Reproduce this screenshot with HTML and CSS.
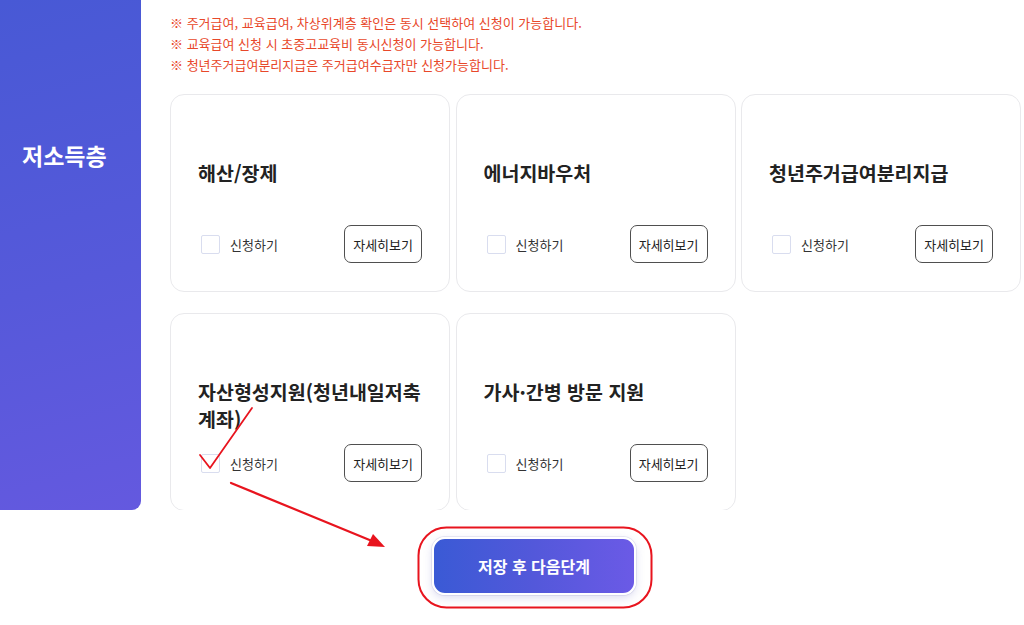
FILE: index.html
```html
<!DOCTYPE html>
<html lang="ko">
<head>
<meta charset="utf-8">
<title>저소득층</title>
<link rel="stylesheet" href="styles.css">
</head>
<body>
<div class="page">
  <div class="section">
    <aside class="side">
      <h2 class="side-title">저소득층</h2>
    </aside>
    <main class="content">
      <ul class="notes">
        <li>※ 주거급여, 교육급여, 차상위계층 확인은 동시 선택하여 신청이 가능합니다.</li>
        <li>※ 교육급여 신청 시 초중고교육비 동시신청이 가능합니다.</li>
        <li>※ 청년주거급여분리지급은 주거급여수급자만 신청가능합니다.</li>
      </ul>
      <div class="grid">
        <div class="card">
          <h3 class="card-title">해산/장제</h3>
          <div class="card-row">
            <label class="check"><span class="box"></span><span class="check-label">신청하기</span></label>
            <button class="detail">자세히보기</button>
          </div>
        </div>
        <div class="card">
          <h3 class="card-title">에너지바우처</h3>
          <div class="card-row">
            <label class="check"><span class="box"></span><span class="check-label">신청하기</span></label>
            <button class="detail">자세히보기</button>
          </div>
        </div>
        <div class="card">
          <h3 class="card-title">청년주거급여분리지급</h3>
          <div class="card-row">
            <label class="check"><span class="box"></span><span class="check-label">신청하기</span></label>
            <button class="detail">자세히보기</button>
          </div>
        </div>
        <div class="card">
          <h3 class="card-title">자산형성지원(청년내일저축계좌)</h3>
          <div class="card-row">
            <label class="check"><span class="box"></span><span class="check-label">신청하기</span></label>
            <button class="detail">자세히보기</button>
          </div>
        </div>
        <div class="card">
          <h3 class="card-title">가사·간병 방문 지원</h3>
          <div class="card-row">
            <label class="check"><span class="box"></span><span class="check-label">신청하기</span></label>
            <button class="detail">자세히보기</button>
          </div>
        </div>
      </div>
    </main>
  </div>
  <div class="footer">
    <button class="next">저장 후 다음단계</button>
  </div>
  <svg class="annot" width="1024" height="625" viewBox="0 0 1024 625" xmlns="http://www.w3.org/2000/svg">
    <polyline points="200,455 210,468 252,408" fill="none" stroke="#e8141e" stroke-width="1.8" stroke-linecap="round" stroke-linejoin="round"/>
    <line x1="231" y1="483" x2="372" y2="541" stroke="#e8141e" stroke-width="2.2" stroke-linecap="round"/>
    <polygon points="385,547 367,546 373,534" fill="#e8141e"/>
    <rect x="418.5" y="527.5" width="233" height="80" rx="28" ry="28" fill="none" stroke="#e8141e" stroke-width="2"/>
  </svg>
</div>
</body>
</html>
```

FILE: styles.css
```css
* { box-sizing: border-box; }
html, body {
  margin: 0;
  padding: 0;
  background: #fff;
  font-family: "Noto Sans CJK KR", "Noto Sans", sans-serif;
  color: #222;
}
.page {
  position: relative;
  width: 1024px;
  height: 625px;
  overflow: hidden;
}
.section {
  display: flex;
  height: 510px;
}
.side {
  flex: 0 0 141px;
  height: 510px;
  background: linear-gradient(165deg, #4859d5 0%, #5659da 55%, #6459df 100%);
  border-bottom-right-radius: 9px;
  padding: 139px 0 0 22px;
}
.side-title {
  margin: 0;
  color: #fff;
  font-size: 23px;
  font-weight: 700;
  line-height: 32px;
  letter-spacing: 0;
}
.content {
  margin-left: 29px;
  width: 852px;
  height: 510px;
  overflow: hidden;
}
.notes {
  list-style: none;
  margin: 0;
  padding: 12px 0 0 0;
}
.notes li {
  font-size: 13px;
  line-height: 21px;
  color: #e8482a;
  height: 21px;
}
.grid {
  margin-top: 19px;
  display: grid;
  grid-template-columns: repeat(3, 280px);
  column-gap: 5.5px;
  row-gap: 21px;
}
.card {
  border: 1.5px solid #e9e9ec;
  border-radius: 14px;
  padding: 64px 27px 28px 27px;
  background: #fff;
}
.card-title {
  margin: 0;
  height: 66px;
  font-size: 19.5px;
  line-height: 27px;
  font-weight: 700;
  color: #222;
  word-break: break-all;
}
.card-row {
  display: flex;
  align-items: center;
  justify-content: space-between;
  height: 38px;
}
.check {
  display: flex;
  align-items: center;
  gap: 10px;
  padding-left: 3px;
}
.box {
  width: 19px;
  height: 19px;
  border: 1.5px solid #d9ddef;
  border-radius: 2px;
  background: #fff;
}
.check-label {
  font-size: 13px;
  color: #333;
}
.detail {
  height: 38px;
  padding: 0 8px;
  border: 1.5px solid #4f4f4f;
  border-radius: 7px;
  background: #fff;
  font-family: "Noto Sans CJK KR", "Noto Sans", sans-serif;
  font-size: 13px;
  color: #222;
}
.footer {
  padding: 27px 0 0 432px;
}
.next {
  width: 204px;
  height: 58px;
  border: 2.5px solid #fff;
  border-radius: 13px;
  background: linear-gradient(90deg, #3a5ad5 0%, #5358da 50%, #6b5ae6 100%);
  box-shadow: 0 3px 8px rgba(120, 120, 200, 0.25), 0 0 0 1px #ececf5;
  color: #fff;
  font-family: "Noto Sans CJK KR", "Noto Sans", sans-serif;
  font-size: 16px;
  font-weight: 700;
}
.annot {
  position: absolute;
  left: 0;
  top: 0;
  pointer-events: none;
}
```
